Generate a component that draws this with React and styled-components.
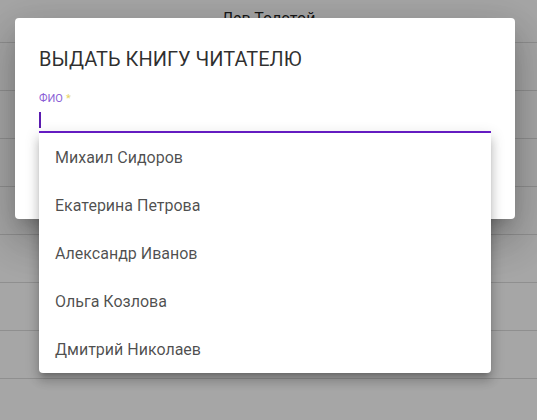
import styled, { createGlobalStyle } from 'styled-components';

const GlobalStyle = createGlobalStyle`
  html, body {
    margin: 0;
    padding: 0;
    font-family: Roboto, "Noto Sans", Arial, sans-serif;
  }
`;

const readers = [
  'Михаил Сидоров',
  'Екатерина Петрова',
  'Александр Иванов',
  'Ольга Козлова',
  'Дмитрий Николаев',
];

const Page = styled.div`
  position: relative;
  width: 537px;
  height: 420px;
  overflow: hidden;
  background: #fff;
`;

const Table = styled.div`
  display: flex;
  flex-direction: column;
  margin-top: -5px;
`;

const Row = styled.div`
  box-sizing: border-box;
  height: 48px;
  display: flex;
  align-items: center;
  justify-content: center;
  border-bottom: 1px solid #dcdcdc;
  font-size: 16px;
  color: rgba(0, 0, 0, 0.87);
`;

const Backdrop = styled.div`
  position: absolute;
  inset: 0;
  background: rgba(0, 0, 0, 0.35);
  display: flex;
  align-items: flex-start;
  padding: 18px 0 0 15px;
`;

const Dialog = styled.div`
  box-sizing: border-box;
  width: 500px;
  height: 201px;
  background: #fff;
  border-radius: 4px;
  box-shadow: 0 11px 15px -7px rgba(0, 0, 0, 0.2), 0 24px 38px 3px rgba(0, 0, 0, 0.14),
    0 9px 46px 8px rgba(0, 0, 0, 0.12);
  display: flex;
  flex-direction: column;
`;

const Title = styled.h2`
  margin: 0;
  padding: 25px 24px 0;
  font-size: 20px;
  line-height: 32px;
  font-weight: 400;
  color: rgba(0, 0, 0, 0.82);
  text-transform: uppercase;
`;

const Field = styled.div`
  position: relative;
  margin: 17px 24px 0;
  display: flex;
  flex-direction: column;
`;

const Label = styled.label`
  font-size: 11px;
  line-height: 14px;
  color: #8b5fd6;
`;

const Star = styled.span`
  color: #e6d468;
  margin-left: 3px;
`;

const InputBox = styled.div`
  height: 20px;
  margin-top: 5px;
  display: flex;
  align-items: flex-start;
  border-bottom: 2px solid #6a1ecb;
`;

const Caret = styled.span`
  width: 2px;
  height: 16px;
  margin-top: 1px;
  background: #5b1cb0;
`;

const Menu = styled.ul`
  position: absolute;
  top: 100%;
  left: 0;
  right: 0;
  margin: 0;
  padding: 0;
  list-style: none;
  background: #fff;
  border-radius: 0 0 4px 4px;
  box-shadow: 0 5px 5px -3px rgba(0, 0, 0, 0.2), 0 8px 10px 1px rgba(0, 0, 0, 0.14),
    0 3px 14px 2px rgba(0, 0, 0, 0.12);
  z-index: 2;
`;

const Item = styled.li`
  height: 48px;
  display: flex;
  align-items: center;
  padding: 0 16px;
  font-size: 16px;
  color: rgba(0, 0, 0, 0.7);
`;

export default function App() {
  return (
    <Page>
      <GlobalStyle />
      <Table>
        <Row>Лев Толстой</Row>
        {Array.from({ length: 8 }).map((_, i) => (
          <Row key={i} />
        ))}
      </Table>
      <Backdrop>
        <Dialog>
          <Title>Выдать книгу читателю</Title>
          <Field>
            <Label>
              ФИО<Star>*</Star>
            </Label>
            <InputBox>
              <Caret />
            </InputBox>
            <Menu>
              {readers.map((name) => (
                <Item key={name}>{name}</Item>
              ))}
            </Menu>
          </Field>
        </Dialog>
      </Backdrop>
    </Page>
  );
}
